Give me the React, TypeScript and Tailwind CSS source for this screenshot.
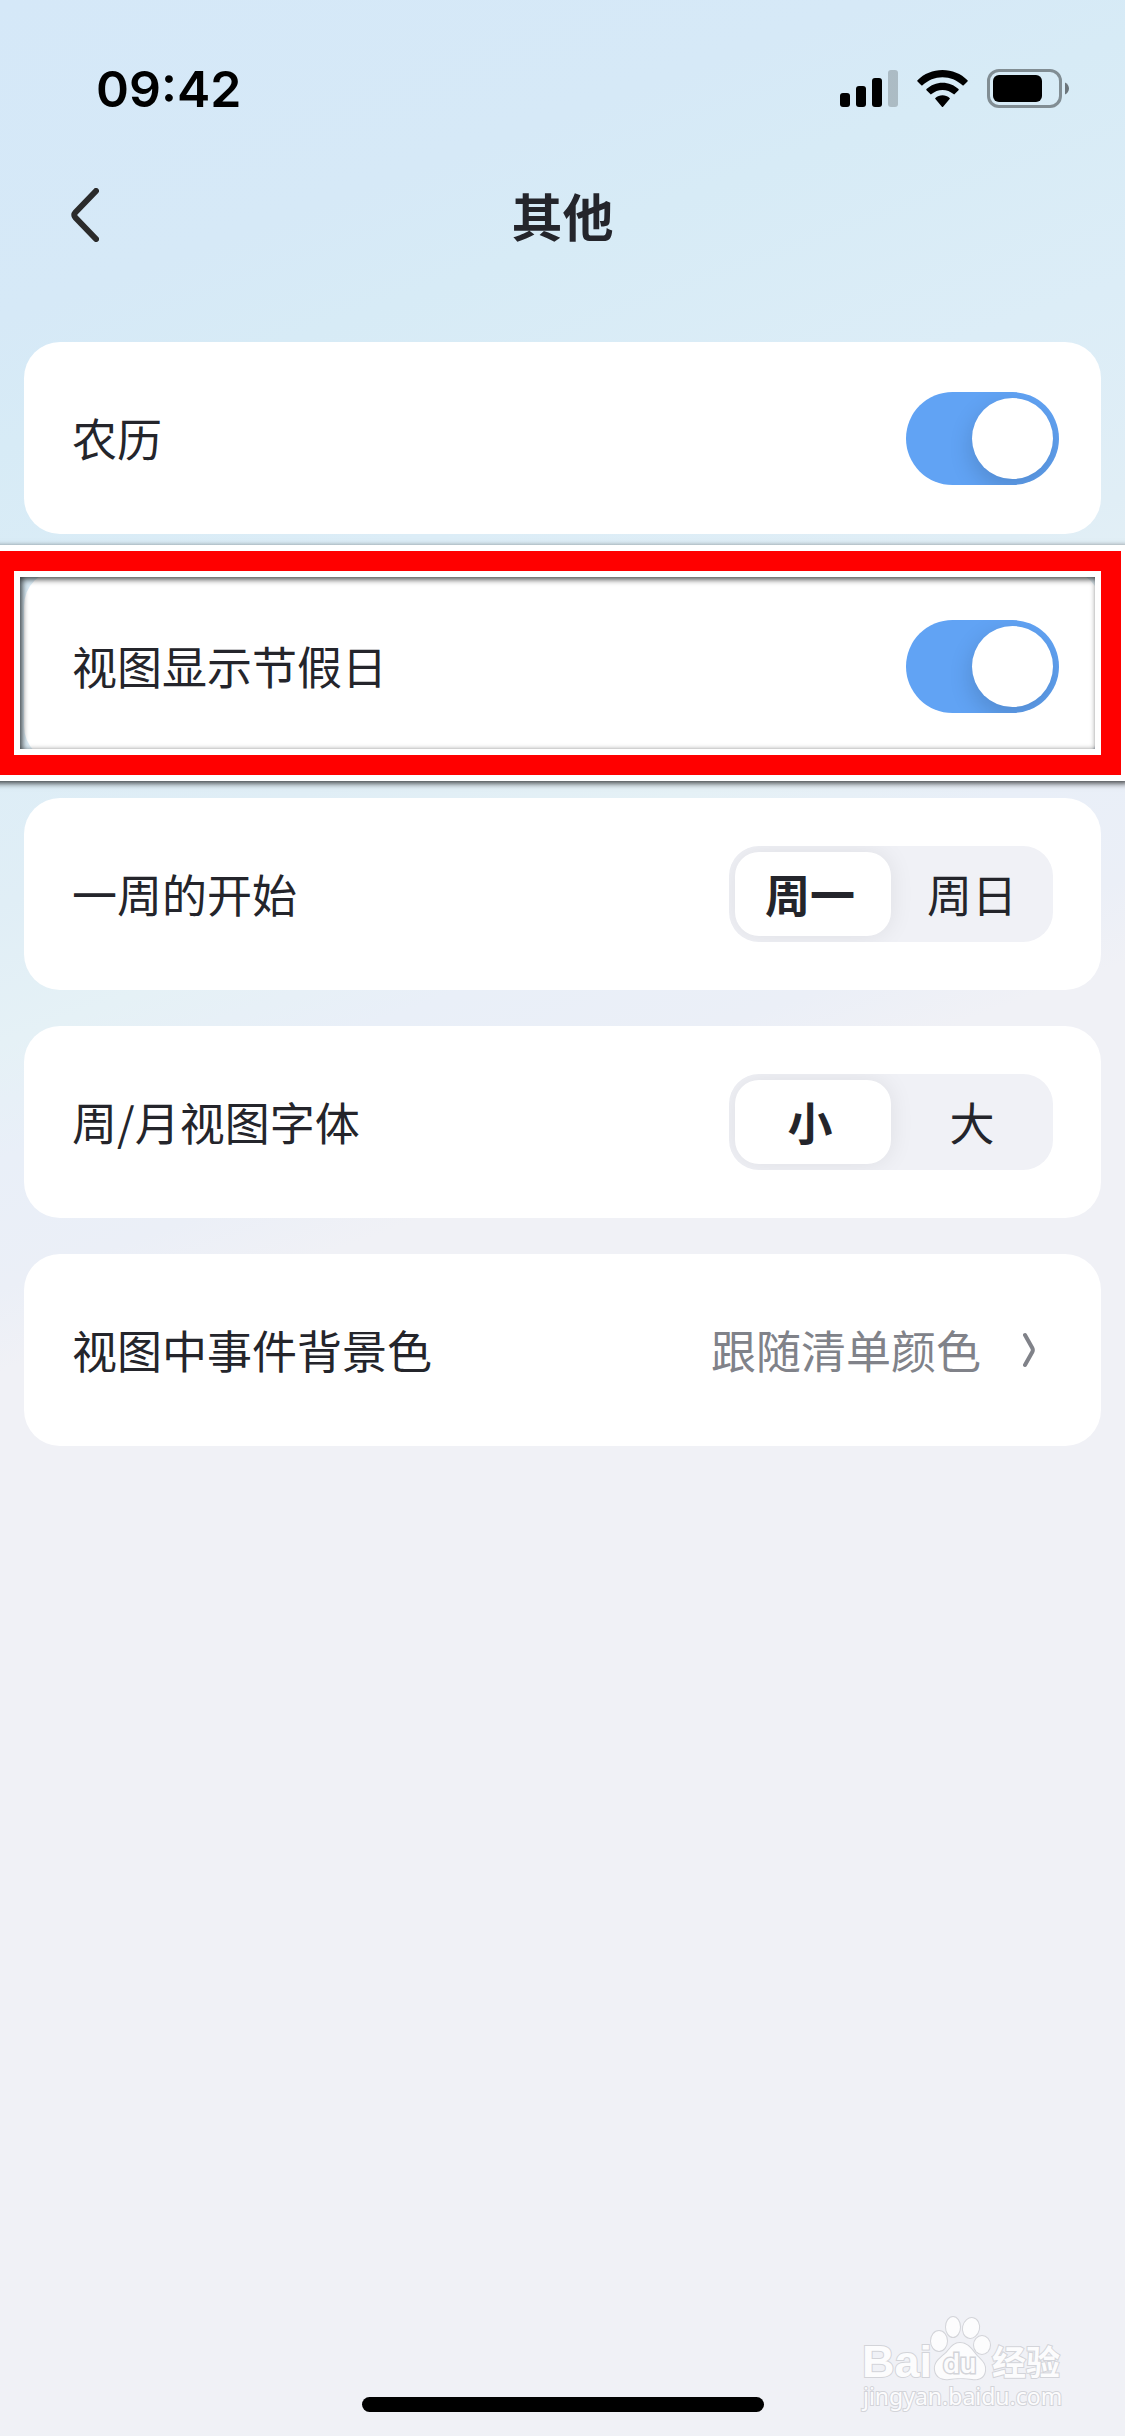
import { useState } from 'react';
import type { ReactNode } from 'react';

interface SwitchProps {
  id: string;
  checked: boolean;
  onChange: (value: boolean) => void;
}

interface SegmentedProps {
  name: string;
  label: string;
  options: string[];
  value: string;
  onChange: (value: string) => void;
}

function StatusBar() {
  return (
    <div className="flex h-[132px] items-center justify-between pt-[45px] pr-[54px] pl-[96px]">
      <span className="font-['Inter','Liberation_Sans',sans-serif] text-[50px] leading-[60px] font-semibold text-black">09:42</span>
      <div className="flex items-center">
        {/* Signal */}
        <svg width="58" height="38" viewBox="0 0 58 38" aria-hidden="true">
          <rect x="0" y="23" width="10" height="14" rx="3" />
          <rect x="16" y="16" width="10" height="21" rx="3" />
          <rect x="32" y="8" width="10" height="29" rx="3" />
          <rect x="48" y="0" width="10" height="37" rx="3" opacity="0.2" />
        </svg>
        {/* Wi-Fi */}
        <svg className="ml-[19px]" width="51" height="38" viewBox="0 0 51 38" aria-hidden="true">
          <path d="M25.5 0C35 0 44 3.700 50.500 10.200C50.900 10.600 50.900 11 50.500 11.400L46.700 15.300C46.300 15.700 45.900 15.700 45.500 15.300C40 10.100 33 7.200 25.500 7.200C18 7.200 11 10.100 5.500 15.300C5.100 15.700 4.700 15.700 4.300 15.300L0.500 11.400C0.100 11 0.100 10.600 0.500 10.200C7 3.700 16 0 25.500 0Z" />
          <path d="M25.500 12.700C31.500 12.700 37.200 15 41.500 19C41.900 19.400 41.900 19.900 41.500 20.300L37.700 24.100C37.300 24.500 36.900 24.500 36.500 24.100C33.500 21.400 29.600 19.900 25.500 19.900C21.400 19.900 17.500 21.400 14.500 24.100C14.100 24.500 13.700 24.500 13.300 24.100L9.500 20.300C9.100 19.900 9.100 19.400 9.500 19C13.800 15 19.500 12.700 25.500 12.700Z" />
          <path d="M25.500 25.300C28.100 25.300 30.600 26.200 32.600 27.900C33 28.300 33 28.700 32.600 29.100L26.100 36.700C25.700 37.100 25.300 37.100 24.900 36.700L18.400 29.100C18 28.700 18 28.300 18.400 27.900C20.400 26.200 22.900 25.300 25.500 25.300Z" />
        </svg>
        {/* Battery */}
        <svg className="ml-[19px]" width="84" height="40" viewBox="0 0 84 40" aria-hidden="true">
          <rect x="1.500" y="1.500" width="72" height="36" rx="10.500" fill="none" stroke="#000" strokeWidth="3" opacity="0.4" />
          <rect x="6" y="6" width="49" height="27" rx="6" />
          <path d="M78 13.500C80.500 14.500 82 17 82 19.500C82 22 80.500 24.500 78 25.500Z" opacity="0.5" />
        </svg>
      </div>
    </div>
  );
}

function Header() {
  return (
    <header className="grid h-[166px] grid-cols-[1fr_auto_1fr] items-center px-[71px]">
      <button type="button" aria-label="返回" className="h-[54px] w-[28px] cursor-pointer">
        <svg width="28" height="54" viewBox="0 0 28 54" fill="none" stroke="#2b2b2b" strokeWidth="6" strokeLinecap="round" strokeLinejoin="round" aria-hidden="true">
          <path d="M25 3L4.300 24.500C2.900 26 2.900 28 4.300 29.500L25 51" />
        </svg>
      </button>
      <h1 className="text-[51px] leading-[60px] font-bold">其他</h1>
    </header>
  );
}

function Card({ children }: { children: ReactNode }) {
  return (
    <section className="relative flex h-[192px] items-center justify-between rounded-[36px] bg-white px-[48px] text-[45px] leading-[60px]">
      {children}
    </section>
  );
}

function Switch({ id, checked, onChange }: SwitchProps) {
  return (
    <span className="relative -mr-[6px] flex h-[93px] w-[153px] shrink-0">
      <input
        id={id}
        type="checkbox"
        role="switch"
        checked={checked}
        onChange={(e) => onChange(e.target.checked)}
        className="peer h-full w-full cursor-pointer appearance-none rounded-full bg-gray-300 checked:bg-[#61a3f4]"
      />
      <span className="pointer-events-none absolute inset-0 flex overflow-hidden rounded-full p-[6px] peer-checked:justify-end">
        <span className="size-[81px] rounded-full bg-white shadow-[0_9px_24px_rgba(0,0,0,0.16)]"></span>
      </span>
    </span>
  );
}

function Segmented({ name, label, options, value, onChange }: SegmentedProps) {
  return (
    <div role="radiogroup" aria-label={label} className="grid h-[96px] w-[324px] shrink-0 grid-cols-2 overflow-hidden rounded-[30px] bg-[#f0f1f6]">
      {options.map((option) => (
        <label key={option} className="group relative flex cursor-pointer items-center justify-center has-checked:font-bold">
          <input
            type="radio"
            name={name}
            value={option}
            checked={value === option}
            onChange={() => onChange(option)}
            className="peer sr-only"
          />
          <span className="absolute inset-y-[6px] right-0 left-0 rounded-[24px] group-first:left-[6px] group-last:right-[6px] peer-checked:bg-white peer-checked:shadow-[0_0_24px_rgba(0,0,0,0.08)]"></span>
          <span className="relative">{option}</span>
        </label>
      ))}
    </div>
  );
}

// Red marker frame drawn over the highlighted row
function Highlight() {
  return (
    <div className="pointer-events-none absolute -top-[25px] -right-[26px] -bottom-[19px] -left-[36px] z-10 border-[6px] border-white shadow-[2px_2px_6px_rgba(0,0,0,0.8)]">
      <div className="h-full border-[20px] border-[#ff0000]">
        <div className="h-full border-[6px] border-white shadow-[inset_2px_2px_6px_rgba(0,0,0,0.8)]"></div>
      </div>
    </div>
  );
}

function Watermark() {
  return (
    <svg
      className="pointer-events-none absolute right-[56px] bottom-[18px]"
      width="210"
      height="108"
      viewBox="0 0 210 108"
      fill="#fcfcfd"
      stroke="#d3d4d9"
      strokeWidth="2"
      paintOrder="stroke"
      aria-hidden="true"
    >
      <text x="3" y="67" fontFamily="'Liberation Sans', sans-serif" fontSize="45" fontWeight="700">Bai</text>
      <ellipse cx="80" cy="31" rx="8" ry="10" />
      <ellipse cx="94" cy="17" rx="7" ry="10" />
      <ellipse cx="112" cy="18" rx="8" ry="10" transform="rotate(12 112 18)" />
      <ellipse cx="123" cy="35" rx="8" ry="9" />
      <path d="M101 33C109 33 113 40 118 46C123 51 127 54 126 61C125 68 119 70 113 69C107 68 96 68 90 69C83 70 77 67 76 60C75 53 80 49 86 44C91 40 93 33 101 33Z" />
      <text x="84" y="63" fontFamily="Inter, 'Liberation Sans', sans-serif" fontSize="27" fontWeight="600" strokeWidth="3">du</text>
      <text x="133" y="65" fontFamily="'Noto Sans CJK SC', sans-serif" fontSize="34" fontWeight="700">经验</text>
      <text x="4" y="95" fontFamily="'Noto Sans', sans-serif" fontSize="23">jingyan.baidu.com</text>
    </svg>
  );
}

export default function App() {
  const [lunar, setLunar] = useState(true);
  const [holidays, setHolidays] = useState(true);
  const [weekStart, setWeekStart] = useState('周一');
  const [fontSize, setFontSize] = useState('小');

  return (
    <div className="relative flex min-h-screen flex-col overflow-hidden bg-[linear-gradient(160deg,#d5e8f8_0px,#d6e9f7_300px,#d7ebf6_420px,#dcedf7_650px,#e0eef6_850px,#e5f1f6_980px,#e9eff8_1090px,#ebeff7_1210px,#f0f1f6_1290px)] font-['Noto_Sans_CJK_SC','Liberation_Sans',sans-serif] text-[#24252b]">
      <StatusBar />
      <Header />

      {/* Settings */}
      <main className="flex flex-col gap-[36px] px-6 pt-[44px]">
        <Card>
          <label htmlFor="lunar">农历</label>
          <Switch id="lunar" checked={lunar} onChange={setLunar} />
        </Card>
        <Card>
          <label htmlFor="holidays">视图显示节假日</label>
          <Switch id="holidays" checked={holidays} onChange={setHolidays} />
          <Highlight />
        </Card>
        <Card>
          <span>一周的开始</span>
          <Segmented name="weekStart" label="一周的开始" options={['周一', '周日']} value={weekStart} onChange={setWeekStart} />
        </Card>
        <Card>
          <span>周/月视图字体</span>
          <Segmented name="fontSize" label="周/月视图字体" options={['小', '大']} value={fontSize} onChange={setFontSize} />
        </Card>
        <Card>
          <span>视图中事件背景色</span>
          <button type="button" className="flex cursor-pointer items-center gap-[42px] pr-[18px] text-[#808289]">
            跟随清单颜色
            <svg width="12" height="36" viewBox="0 0 12 36" fill="none" stroke="currentColor" strokeWidth="4" strokeLinecap="round" strokeLinejoin="round" aria-hidden="true">
              <path d="M2 3L9.300 16C10 17.300 10 18.700 9.300 20L2 33" />
            </svg>
          </button>
        </Card>
      </main>

      {/* Home indicator */}
      <div className="mx-auto mt-auto mb-[24px] h-[15px] w-[402px] rounded-full bg-black"></div>
      <Watermark />
    </div>
  );
}
